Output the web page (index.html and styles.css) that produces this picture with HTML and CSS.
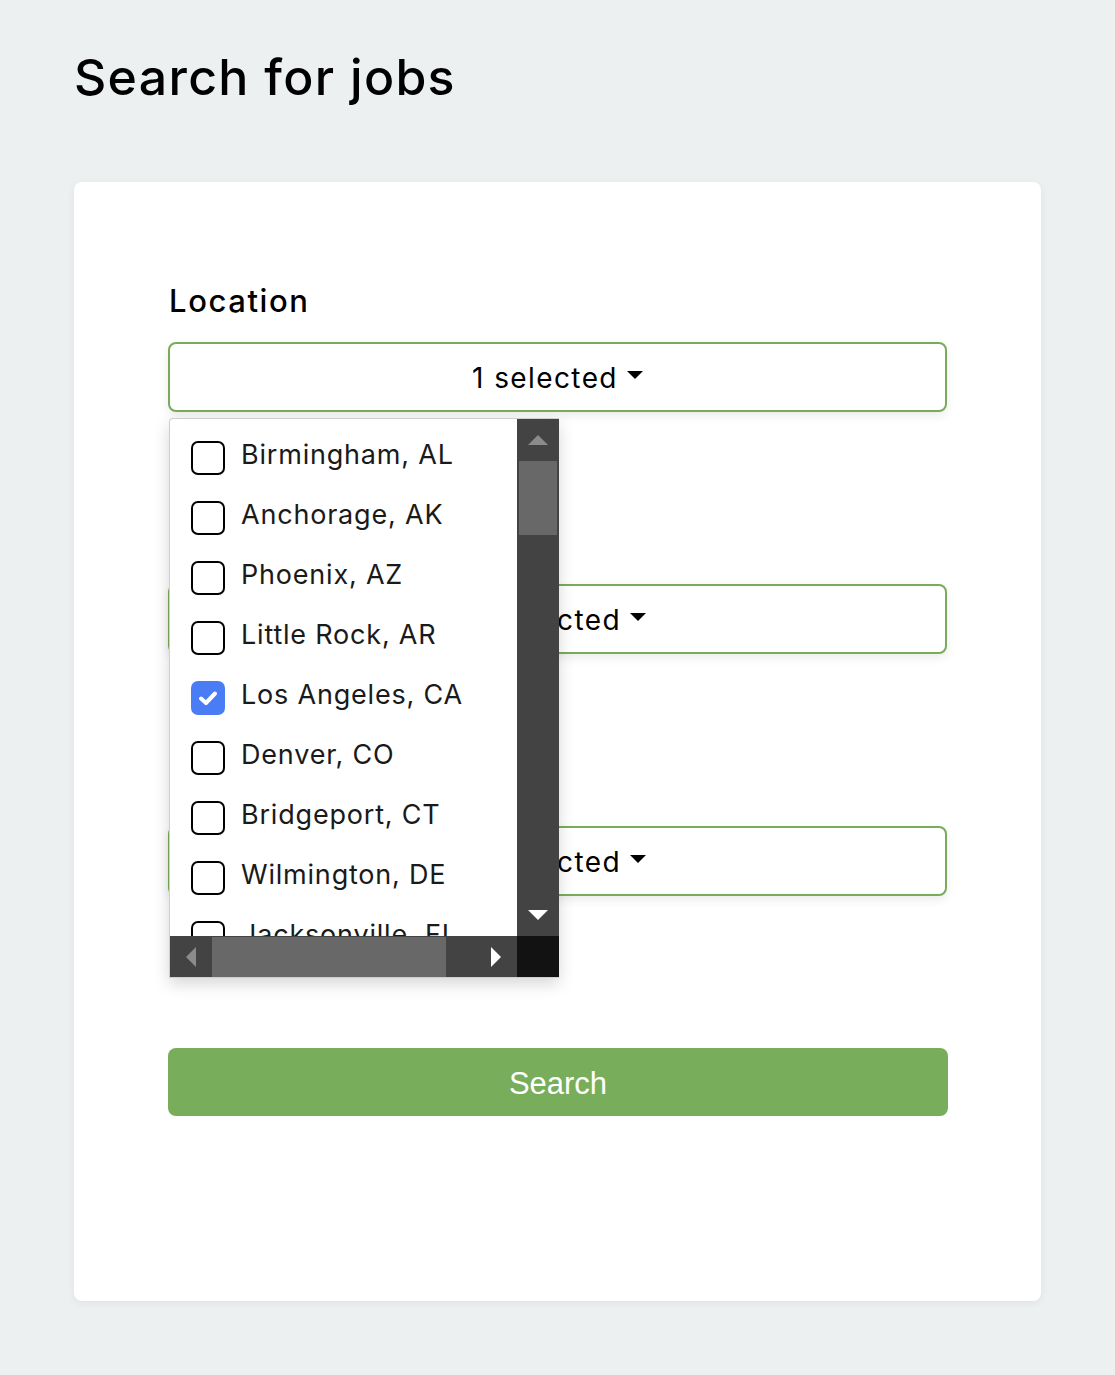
FILE: index.html
```html
<!DOCTYPE html>
<html lang="en">
<head>
<meta charset="utf-8">
<title>Search for jobs</title>
<link rel="stylesheet" href="styles.css">
</head>
<body>
<h1 class="title">Search for jobs</h1>
<div class="card">
  <div class="field">
    <div class="label">Location</div>
    <div class="select">1 selected<span class="caret"></span></div>
    <div class="dropdown">
      <div class="list">
        <div class="item"><span class="box"></span><span class="name">Birmingham, AL</span></div>
        <div class="item"><span class="box"></span><span class="name">Anchorage, AK</span></div>
        <div class="item"><span class="box"></span><span class="name">Phoenix, AZ</span></div>
        <div class="item"><span class="box"></span><span class="name">Little Rock, AR</span></div>
        <div class="item"><span class="box checked"><svg viewBox="0 0 34 34" width="34" height="34"><path d="M10 17.5 L15 22 L24 12.5" fill="none" stroke="#fff" stroke-width="4" stroke-linecap="round" stroke-linejoin="round"/></svg></span><span class="name">Los Angeles, CA</span></div>
        <div class="item"><span class="box"></span><span class="name">Denver, CO</span></div>
        <div class="item"><span class="box"></span><span class="name">Bridgeport, CT</span></div>
        <div class="item"><span class="box"></span><span class="name">Wilmington, DE</span></div>
        <div class="item"><span class="box"></span><span class="name">Jacksonville, FL</span></div>
      </div>
      <div class="vbar">
        <span class="arrow up"></span>
        <span class="vthumb"></span>
        <span class="arrow down"></span>
      </div>
      <div class="hbar">
        <span class="arrow left"></span>
        <span class="hthumb"></span>
        <span class="arrow right"></span>
      </div>
      <div class="corner"></div>
    </div>
  </div>
  <div class="field">
    <div class="label">Job type</div>
    <div class="select">0 selected<span class="caret"></span></div>
  </div>
  <div class="field">
    <div class="label">Category</div>
    <div class="select">0 selected<span class="caret"></span></div>
  </div>
  <button class="search">Search</button>
</div>
</body>
</html>
```
FILE: styles.css
```css
* { box-sizing: border-box; }
html, body { margin: 0; }
body {
  background: #ecf0f1;
  font-family: Inter, "Noto Sans", sans-serif;
  color: #000;
  padding: 46px 74px 74px 74px;
  min-height: 1375px;
}
.title {
  margin: 0;
  font-size: 50px;
  font-weight: 500;
  line-height: 62px;
  letter-spacing: 1.3px;
}
.card {
  margin-top: 74px;
  width: 967px;
  height: 1119px;
  background: #fff;
  border-radius: 8px;
  box-shadow: 0 2px 8px rgba(0,0,0,0.06);
  padding: 100px 94px 0 94px;
}
.field {
  position: relative;
  height: 242px;
}
.label {
  font-size: 31px;
  font-weight: 500;
  line-height: 38px;
  letter-spacing: 1.6px;
  margin-left: 1px;
}
.select {
  margin-top: 22px;
  height: 70px;
  border: 2px solid #79ac5a;
  border-radius: 8px;
  display: flex;
  align-items: center;
  justify-content: center;
  font-size: 28px;
  line-height: 34px;
  letter-spacing: 1.4px;
  padding-top: 2px;
  box-shadow: 0 4px 10px rgba(0,0,0,0.08);
  background: #fff;
}
.caret {
  display: inline-block;
  width: 0;
  height: 0;
  margin-left: 9px;
  margin-bottom: 6px;
  border-left: 8px solid transparent;
  border-right: 8px solid transparent;
  border-top: 8px solid #000;
}
.dropdown {
  position: absolute;
  left: 1px;
  top: 136px;
  width: 390px;
  height: 560px;
  background: #fff;
  border: 1px solid #cfcfcf;
  border-right: 0;
  border-radius: 4px 0 0 0;
  box-shadow: 0 6px 16px rgba(0,0,0,0.16);
  display: grid;
  grid-template-columns: 347px 42px;
  grid-template-rows: 517px 42px;
  overflow: hidden;
  z-index: 5;
}
.list {
  overflow: hidden;
  padding: 6px 0 0 21px;
}
.item {
  display: flex;
  align-items: center;
  height: 60px;
  gap: 16px;
  font-size: 27px;
  letter-spacing: 0.8px;
  color: #1a1a1a;
  white-space: nowrap;
}
.box {
  width: 34px;
  height: 34px;
  flex: none;
  border: 2px solid #000;
  border-radius: 7px;
  margin-top: 6px;
}
.box.checked {
  border: 0;
  background: #4a7cf6;
}
.box.checked svg { display: block; }
.name { line-height: 34px; }
.vbar {
  background: #434343;
  display: flex;
  flex-direction: column;
  align-items: center;
  padding-top: 16px;
}
.vthumb {
  display: block;
  width: 38px;
  height: 74px;
  background: #686868;
  margin-top: 16px;
}
.arrow {
  display: block;
  width: 0;
  height: 0;
}
.arrow.up {
  border-left: 10px solid transparent;
  border-right: 10px solid transparent;
  border-bottom: 10px solid #8b8b8b;
}
.arrow.down {
  margin-top: auto;
  margin-bottom: 16px;
  border-left: 10px solid transparent;
  border-right: 10px solid transparent;
  border-top: 10px solid #fff;
}
.hbar {
  background: #434343;
  display: flex;
  align-items: center;
  padding: 0 0 0 16px;
}
.arrow.left {
  border-top: 10px solid transparent;
  border-bottom: 10px solid transparent;
  border-right: 10px solid #8b8b8b;
}
.hthumb {
  display: block;
  width: 234px;
  height: 40px;
  margin-left: 16px;
  background: #686868;
}
.arrow.right {
  margin-left: 45px;
  border-top: 10px solid transparent;
  border-bottom: 10px solid transparent;
  border-left: 10px solid #fff;
}
.corner { background: #121212; }
.search {
  display: block;
  width: 780px;
  height: 68px;
  margin-top: 40px;
  border: 0;
  border-radius: 8px;
  background: #78ad5b;
  color: #fff;
  font-family: "Liberation Sans", Arial, sans-serif;
  font-size: 31px;
  padding: 4px 0 0 0;
}
```
